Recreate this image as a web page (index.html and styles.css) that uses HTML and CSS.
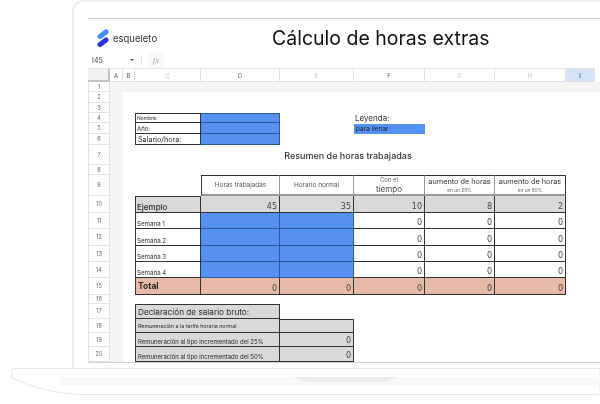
FILE: index.html
```html
<!DOCTYPE html>
<html lang="es">
<head>
<meta charset="utf-8">
<title>Cálculo de horas extras</title>
<link rel="stylesheet" href="styles.css">
</head>
<body>
<div class="lid">
  <div class="screen">
    <header class="brandbar">
      <svg class="logo" width="12" height="19" viewBox="0 0 12 19"><path d="M3 7.500 9 3" stroke="#3f8cf2" stroke-width="5" stroke-linecap="round" fill="none"/><path d="M3 15.500 9 11" stroke="#2b34dd" stroke-width="5" stroke-linecap="round" fill="none"/></svg>
      <span class="brand">esqueleto</span>
      <h1 class="title">Cálculo de horas extras</h1>
    </header>
    <div class="formula">
      <span class="namebox">I45</span>
      <span class="caret"></span>
      <span class="divider"></span>
      <span class="fx">fx</span>
    </div>
    <div class="sheet">
      <div class="corner"></div><div class="ch">A</div><div class="ch">B</div><div class="ch faint">C</div><div class="ch">D</div><div class="ch faint">E</div><div class="ch">F</div><div class="ch faint">G</div><div class="ch faint">H</div><div class="ch active">I</div>

      <div class="rh">1</div><div class="band"></div>
      <div class="rh">2</div><div class="gutter"></div>
      <div class="rh">3</div><div class="gutter"></div>

      <div class="rh">4</div><div class="gutter"></div>
      <div class="cell cc top left lbl t-xs">Nombre:</div><div class="cell cd top blue"></div>
      <div class="legend cf">Leyenda:</div>

      <div class="rh">5</div><div class="gutter"></div>
      <div class="cell cc left lbl t-s">Año:</div><div class="cell cd blue"></div>
      <div class="fill cf">para llenar</div>

      <div class="rh">6</div><div class="gutter"></div>
      <div class="cell cc left lbl t-m">Salario/hora:</div><div class="cell cd blue"></div>

      <div class="rh">7</div><div class="gutter"></div>
      <div class="summary">Resumen de horas trabajadas</div>

      <div class="rh">8</div><div class="gutter"></div>

      <div class="rh">9</div><div class="gutter"></div>
      <div class="cell cd top left head"><span class="t-h">Horas trabajadas</span></div>
      <div class="cell ce top head"><span class="t-h">Horario normal</span></div>
      <div class="cell cf top head"><span class="t-sub">Con el</span><span class="t-big">tiempo</span></div>
      <div class="cell cg top head"><span class="t-up">aumento de horas</span><span class="t-tiny">en un 25%</span></div>
      <div class="cell ch8 top head"><span class="t-up">aumento de horas</span><span class="t-tiny">en un 50%</span></div>

      <div class="rh">10</div><div class="gutter"></div>
      <div class="cell cc top left lbl grey strong">Ejemplo</div>
      <div class="cell cd grey num">45</div><div class="cell ce grey num">35</div><div class="cell cf grey num">10</div><div class="cell cg grey num">8</div><div class="cell ch8 grey num">2</div>

      <div class="rh">11</div><div class="gutter"></div>
      <div class="cell cc left lbl t-w">Semana 1</div><div class="cell cd blue"></div><div class="cell ce blue"></div><div class="cell cf num">0</div><div class="cell cg num">0</div><div class="cell ch8 num">0</div>

      <div class="rh">12</div><div class="gutter"></div>
      <div class="cell cc left lbl t-w">Semana 2</div><div class="cell cd blue"></div><div class="cell ce blue"></div><div class="cell cf num">0</div><div class="cell cg num">0</div><div class="cell ch8 num">0</div>

      <div class="rh">13</div><div class="gutter"></div>
      <div class="cell cc left lbl t-w">Semana 3</div><div class="cell cd blue"></div><div class="cell ce blue"></div><div class="cell cf num">0</div><div class="cell cg num">0</div><div class="cell ch8 num">0</div>

      <div class="rh">14</div><div class="gutter"></div>
      <div class="cell cc left lbl t-w">Semana 4</div><div class="cell cd blue"></div><div class="cell ce blue"></div><div class="cell cf num">0</div><div class="cell cg num">0</div><div class="cell ch8 num">0</div>

      <div class="rh">15</div><div class="gutter"></div>
      <div class="cell cc left lbl salmon total">Total</div><div class="cell cd salmon num">0</div><div class="cell ce salmon num">0</div><div class="cell cf salmon num">0</div><div class="cell cg salmon num">0</div><div class="cell ch8 salmon num">0</div>

      <div class="rh">16</div><div class="gutter"></div>

      <div class="rh">17</div><div class="gutter"></div>
      <div class="cell cm top left lbl grey decl">Declaración de salario bruto:</div>

      <div class="rh">18</div><div class="gutter"></div>
      <div class="cell cm left lbl grey t-pay-s">Remuneración a la tarifa horaria normal</div><div class="cell ce top grey"></div>

      <div class="rh">19</div><div class="gutter"></div>
      <div class="cell cm left lbl grey t-pay">Remuneración al tipo incrementado del 25%</div><div class="cell ce grey num">0</div>

      <div class="rh">20</div><div class="gutter"></div>
      <div class="cell cm left lbl grey t-pay">Remuneración al tipo incrementado del 50%</div><div class="cell ce grey num">0</div>
    </div>
  </div>
</div>
<svg class="base" width="600" height="36" viewBox="0 0 600 36">
  <path d="M600 .5H14Q12 .5 12 2.500V10Q40 24 78 26.500H600Z" fill="#fff" stroke="#e9e9e9"/>
  <rect x="60" y="9" width="540" height="8" fill="#f8f8f8"/>
  <path d="M293 9H397L385 14H308Z" fill="#ebebeb"/>
</svg>
</body>
</html>
```
FILE: styles.css
```css
* { box-sizing: border-box; }
html, body { margin: 0; padding: 0; }
body {
  width: 600px;
  height: 404px;
  overflow: hidden;
  background: #fff;
  font-family: Inter, "Liberation Sans", sans-serif;
  color: #222;
}
.lid {
  margin-left: 72px;
  height: 368px;
  width: 540px;
  padding: 16px 0 0 14px;
  border-top: 2px solid #ececec;
  border-left: 2px solid #ececec;
  border-top-left-radius: 11px;
}
.screen {
  height: 345px;
  border-top: 1px solid #cfcfcf;
  border-bottom: 1px solid #d0d0d0;
  display: flex;
  flex-direction: column;
  filter: blur(.3px);
}
.brandbar {
  height: 34px;
  display: flex;
  align-items: center;
  padding: 5px 0 0 9px;
}
.logo { flex: none; }
.brand {
  margin-left: 4px;
  width: 50px;
  font-size: 9.500px;
  color: #333;
}
.title {
  margin: 0 0 0 109px;
  font-size: 19.500px;
  font-weight: 400;
  color: #111;
  white-space: nowrap;
}
.formula {
  height: 16px;
  display: flex;
  align-items: center;
  padding-left: 4px;
  font-size: 7px;
  color: #444;
}
.namebox { width: 38px; }
.caret {
  width: 0;
  height: 0;
  border-left: 2.500px solid transparent;
  border-right: 2.500px solid transparent;
  border-top: 2.500px solid #555;
  margin-right: 7px;
}
.divider { width: 1px; height: 10px; background: #e2e2e2; margin-right: 6px; }
.fx {
  font-family: "Liberation Serif", serif;
  font-style: italic;
  font-size: 9px;
  color: #aaa;
  width: 16px;
  height: 16px;
  line-height: 16px;
  text-align: center;
  background: #f9f9f9;
}
.sheet {
  display: grid;
  grid-template-columns: 22px 13px 12px 66px 79px 74px 71px 70px 71px 29px 10px;
  grid-template-rows: 14px 10px 11px 10px 10px 11px 11px 20px 10px 21px 17px 16px 17px 16px 16px 17px 9px 15px 14px 14px 15px;
  font-size: 6px;
}
.corner {
  background: #f1f1f1;
  border-right: 2px solid #c4c4c4;
  border-bottom: 2px solid #c4c4c4;
  border-top: 1px solid #e4e4e4;
}
.ch {
  display: flex;
  align-items: center;
  justify-content: center;
  border-top: 1px solid #e4e4e4;
  border-right: 1px solid #dfdfdf;
  border-bottom: 1px solid #dfdfdf;
  color: #666;
  font-size: 6px;
}
.ch.faint { color: #c4c4c4; }
.ch.active { background: #d3e2f6; color: #334; }
.rh {
  grid-column: 1;
  display: flex;
  align-items: center;
  justify-content: center;
  border-right: 1px solid #e2e2e2;
  border-bottom: 1px solid #e2e2e2;
  border-left: 1px solid #e2e2e2;
  color: #666;
  font-size: 5.500px;
}
.band { grid-column: 2 / -1; background: #f5f5f5; }
.gutter { grid-column: 2; background: #f5f5f5; }
.cc { grid-column: 4; }
.cd { grid-column: 5; }
.ce { grid-column: 6; }
.cf { grid-column: 7; }
.cg { grid-column: 8; }
.ch8 { grid-column: 9; }
.cm { grid-column: 4 / 6; }
.cell {
  display: flex;
  align-items: center;
  min-width: 0;
  white-space: nowrap;
  border-right: 1px solid #333;
  border-bottom: 1px solid #333;
  background: #fff;
}
.top { border-top: 1px solid #333; }
.left { border-left: 1px solid #333; }
.lbl { padding-left: 1px; color: #2a2a2a; }
.blue { background: #5491f0; border-color: #2f5a9e; }
.grey { background: #d9d9d9; }
.salmon { background: #e6b9a9; }
.num {
  align-items: flex-end;
  justify-content: flex-end;
  padding-right: 2px;
  padding-bottom: 1px;
  font-family: "DejaVu Sans", sans-serif;
  font-size: 8px;
  color: #444;
}
.t-xs { font-size: 5px; }
.t-s { font-size: 6px; }
.t-m { font-size: 7.200px; padding-left: 2px; }
.t-w { font-size: 6.200px; align-items: flex-end; padding-bottom: 1px; }
.strong { font-size: 8px; font-weight: 500; align-items: flex-end; }
.total { font-size: 8.500px; font-weight: 700; padding-left: 2px; }
.decl { font-size: 8.200px; padding-left: 2px; }
.t-pay { font-size: 6px; padding-left: 2px; align-items: flex-end; padding-bottom: 1px; }
.t-pay-s { font-size: 5.300px; padding-left: 2px; }
.legend { font-size: 8px; color: #333; display: flex; align-items: center; padding-left: 1px; }
.fill {
  background: #5491f0;
  font-size: 6.500px;
  display: flex;
  align-items: center;
  padding-left: 2px;
  color: #223;
  margin-top: 1px;
}
.summary {
  grid-column: 5 / 9;
  font-size: 9px;
  font-weight: 500;
  color: #333;
  display: flex;
  align-items: flex-end;
  justify-content: center;
  padding-bottom: 4px;
}
.head {
  flex-direction: column;
  justify-content: center;
  gap: 1px;
  border-bottom-color: #999;
  border-bottom-width: 2px;
}
.cd.head, .ce.head, .cf.head, .cg.head { border-right-color: #999; }
.t-h { font-size: 6.400px; color: #555; }
.t-sub { font-size: 6px; color: #666; }
.t-big { font-size: 8px; color: #444; }
.t-up { font-size: 7.300px; color: #333; }
.t-tiny { font-size: 4.800px; color: #666; }
.base { display: block; }
```
